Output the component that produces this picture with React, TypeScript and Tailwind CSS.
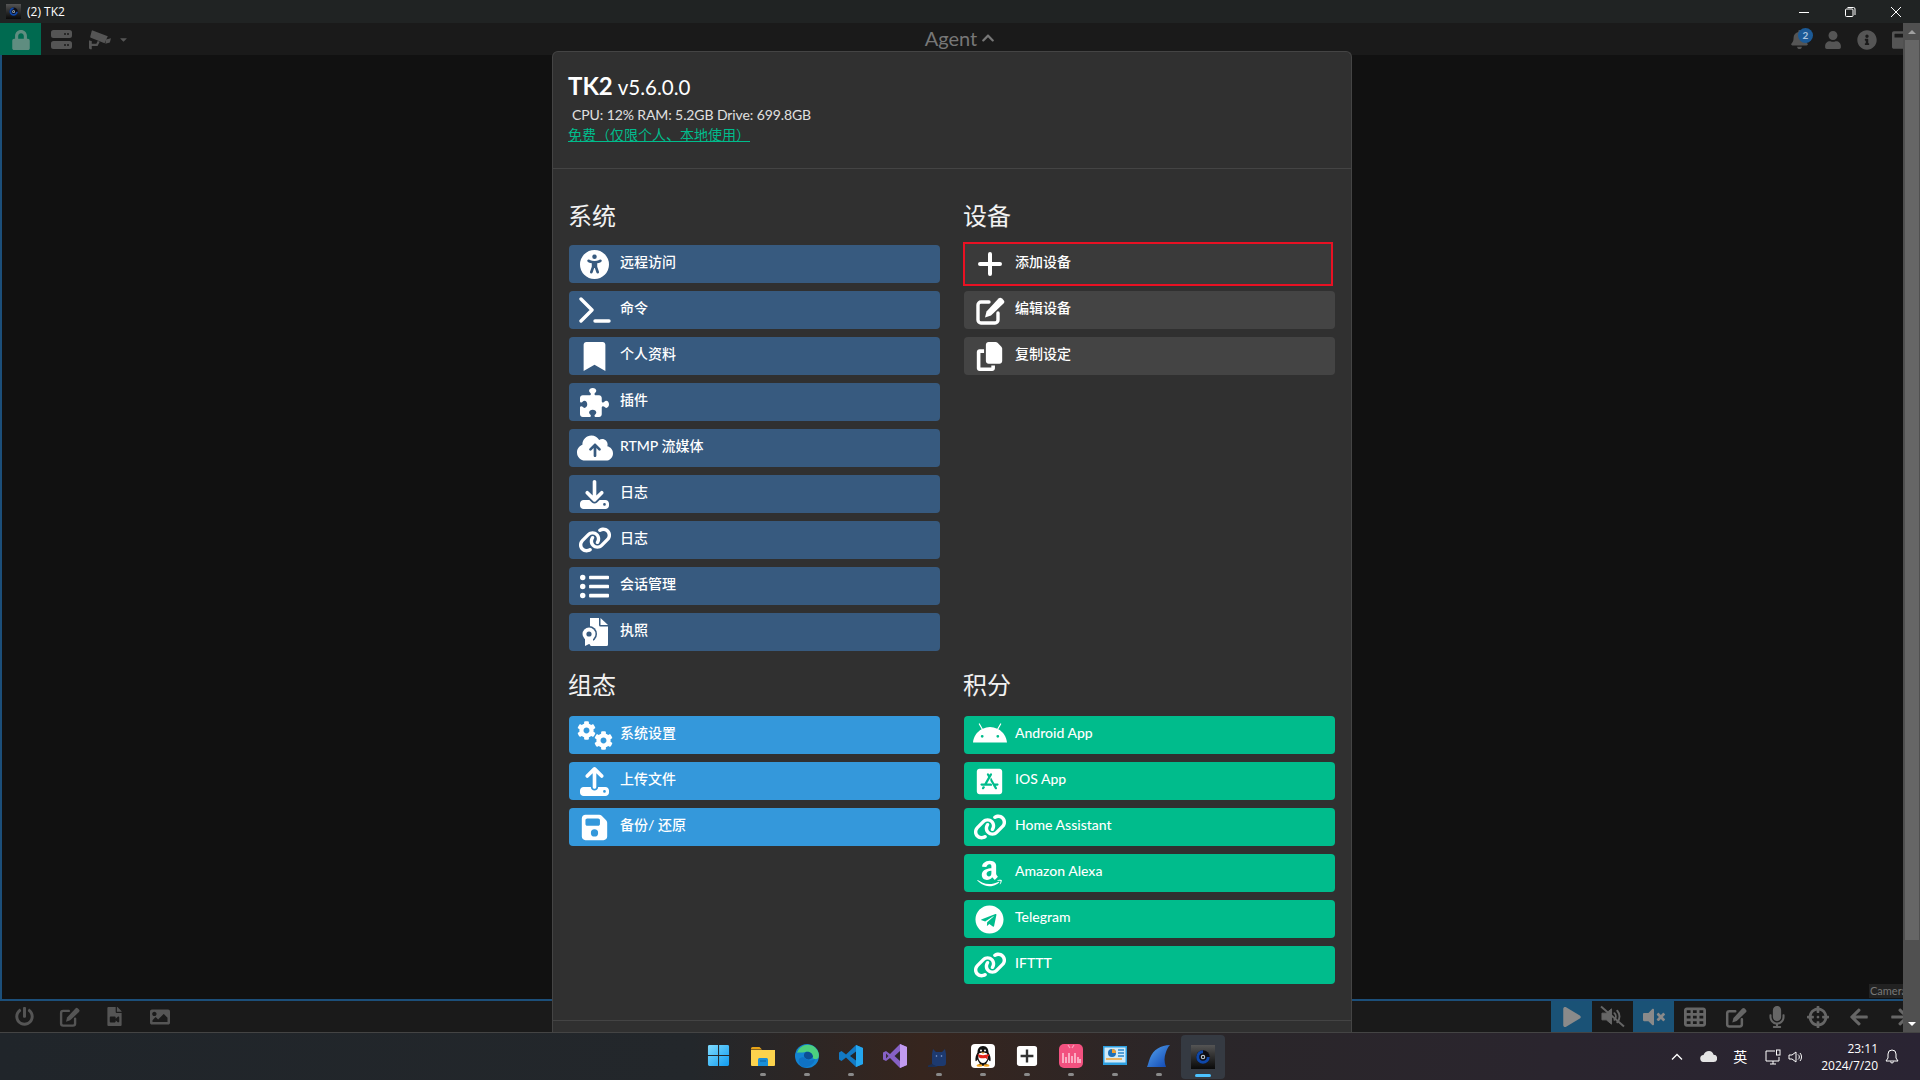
import React from 'react';
import {
  FaBookmark, FaListUl, FaAppStoreIos, FaAmazon, FaTelegram, FaLock, FaCaretDown, FaCog,
  FaChevronUp, FaBell, FaUser, FaInfoCircle, FaWindowMaximize, FaPowerOff, FaFileVideo, FaImage, FaPlay,
  FaVolumeMute, FaMicrophone, FaCrosshairs, FaArrowLeft, FaArrowRight,
} from 'react-icons/fa';
import {
  FaAndroid, FaCopy, FaUniversalAccess, FaPuzzlePiece, FaCloudArrowUp, FaDownload, FaUpload, FaFloppyDisk,
  FaLink, FaTableCells,
} from 'react-icons/fa6';

const FileCert = () => (
  <svg viewBox="0 0 30 30" className="w-[30px] h-[30px]" fill="currentColor">
    <path d="M10 1h9v7a1.5 1.5 0 0 0 1.5 1.5H28v18a1.5 1.5 0 0 1-1.5 1.5h-15A1.5 1.5 0 0 1 10 27.5z" />
    <path d="M20.5 1 28 8h-7.5z" />
    <circle cx="9" cy="17" r="8" fill="#375a7f" />
    <circle cx="9" cy="17" r="6.5" />
    <circle cx="9" cy="17" r="2.6" fill="#375a7f" />
    <path d="M5 22h8v7l-4-2-4 2z" />
  </svg>
);

const TerminalIcon = () => (
  <svg viewBox="0 0 32 26" className="w-[32px] h-[26px]" fill="none" stroke="currentColor" strokeWidth="3.4" strokeLinecap="round" strokeLinejoin="round">
    <path d="M2 2 13 13 2 24" />
    <path d="M16 24h14" />
  </svg>
);

const PlusIcon = () => (
  <svg viewBox="0 0 24 24" className="w-[24px] h-[24px]" fill="none" stroke="currentColor" strokeWidth="4" strokeLinecap="round">
    <path d="M12 2v20M2 12h20" />
  </svg>
);

const PenSquare = ({ size }: { size: string }) => (
  <svg viewBox="0 0 30 30" className={size} fill="currentColor">
    <path d="M14 7H6a3 3 0 0 0-3 3v15a3 3 0 0 0 3 3h14a3 3 0 0 0 3-3v-7" fill="none" stroke="currentColor" strokeWidth="3.4" strokeLinecap="round" />
    <path d="M10 22.500l1.500-6L23.500 3.500a2.500 2.500 0 0 1 3.500 0l1.500 1.500a2.500 2.500 0 0 1 0 3.500L16 20.500z" />
  </svg>
);

const Gears = () => (
  <div className="relative w-[36px] h-[29px]">
    <FaCog size={19} className="absolute left-0 top-0" />
    <FaCog size={19} className="absolute left-[17px] top-[10px]" />
  </div>
);

const ServerIcon = () => (
  <svg viewBox="0 0 21 19" className="w-[21px] h-[19px]" fill="currentColor">
    <path fillRule="evenodd" d="M2.500 0h16A2.500 2.500 0 0 1 21 2.500v3A2.500 2.500 0 0 1 18.500 8h-16A2.500 2.500 0 0 1 0 5.500v-3A2.500 2.500 0 0 1 2.500 0zM13 3.200v1.500h2V3.200zm3 0v1.500h2V3.200zM2.500 11h16a2.500 2.500 0 0 1 2.500 2.500v3a2.500 2.500 0 0 1-2.500 2.500h-16A2.500 2.500 0 0 1 0 16.500v-3A2.500 2.500 0 0 1 2.500 11zM13 14.200v1.500h2v-1.500zm3 0v1.500h2v-1.500z" />
  </svg>
);

const Cctv = () => (
  <svg viewBox="0 0 26 24" className="w-[24px] h-[22px]" fill="currentColor">
    <path d="M5 1.500 21.500 8l-3.500 7.500L3 9.500a1 1 0 0 1-.6-1.300L4 2a1 1 0 0 1 1-.5z" />
    <path d="M19.500 11.500 25 10l-1.300 4.600-4.800 1.500z" />
    <path d="M2 13h2v3h5l1.500-3 2.200 1-2.400 4.500H4V22H2v-9z" />
    <path d="M1 12.500h1.500v9H1z" />
  </svg>
);

const VolumeSlash = () => (
  <svg viewBox="0 0 26 24" className="w-[25px] h-[23px]" fill="none" stroke="currentColor">
    <path d="M2 8.500h4.500L12 4v16l-5.500-4.500H2z" fill="currentColor" strokeWidth="1" />
    <path d="M15 8.500a5 5 0 0 1 0 7M18 6a9 9 0 0 1 0 12" strokeWidth="2" strokeLinecap="round" />
    <path d="M1 1.500 25 22.500" strokeWidth="2" />
  </svg>
);

const WinLogo = () => (
  <svg viewBox="0 0 24 24" className="w-[23px] h-[23px]">
    <defs>
      <linearGradient id="win" x1="0" y1="0" x2="1" y2="1">
        <stop offset="0" stopColor="#7fdcff" />
        <stop offset="1" stopColor="#0f9bf0" />
      </linearGradient>
    </defs>
    <path d="M1 2.500A1.500 1.500 0 0 1 2.500 1h9v10.400H1zM12.600 1h8.900A1.500 1.500 0 0 1 23 2.500v8.900H12.600zM1 12.600h10.500V23h-9A1.500 1.500 0 0 1 1 21.500zM12.600 12.600H23v8.900a1.500 1.500 0 0 1-1.500 1.500h-8.900z" fill="url(#win)" />
  </svg>
);

const Folder = () => (
  <svg viewBox="0 0 24 24" className="w-[24px] h-[24px]">
    <path d="M0 4.500A1.500 1.500 0 0 1 1.500 3h7l2.500 2.500h-11z" fill="#e8a317" />
    <path d="M0 6h24v15a1 1 0 0 1-1 1H1a1 1 0 0 1-1-1z" fill="#fcd34d" />
    <path d="M7 15.500a1.500 1.500 0 0 1 1.500-1.500h7a1.500 1.500 0 0 1 1.500 1.500V22H7z" fill="#1a8fd8" />
    <path d="M9 17h6" stroke="#0d5f9e" strokeWidth="1" />
  </svg>
);

const Edge = () => (
  <svg viewBox="0 0 24 24" className="w-[24px] h-[24px]">
    <circle cx="12" cy="12" r="12" fill="#1383d1" />
    <path d="M2 9C4 2 11-1 17 1.500 22 4 25 9 23.500 13.500c-1 2-5 2-6 0 0-3-3-6.500-7-5.500C7 9 3 8 2 9z" fill="#4cd07f" />
    <path d="M11 8c4-1 7 2 7 5-2 3-6 3-8 1-2-2-1-5 1-6z" fill="#0c4f94" />
    <path d="M10 14c2 3 7 3 10 1-1 5-6 9-12 8-3-1-5-5-4-8 2-2 5-2 6-1z" fill="#0f72c4" />
  </svg>
);

const VsCode = () => (
  <svg viewBox="0 0 24 24" className="w-[24px] h-[24px]">
    <path d="M17 1 24 4v16l-7 3-10-9.500L2.500 17 0 15.500v-7L2.500 7 7 10.500z" fill="#1279c4" />
    <path d="M17 1 24 4v16l-7 3z" fill="#24a6ee" />
    <path d="M17 7.500 11 12l6 4.500z" fill="#232629" />
  </svg>
);

const VsIde = () => (
  <svg viewBox="0 0 24 24" className="w-[24px] h-[24px]">
    <path d="M17 0 24 3v18l-7 3-10-10-4 3-3-1.500v-7L3 7l4 3z" fill="#8661c5" />
    <path d="M17 0 24 3v18l-7 3z" fill="#c29bf0" />
    <path d="M17 7 11.500 12l5.500 5z" fill="#2c2628" />
    <path d="M3 9.500v5L5.500 12z" fill="#3a2c3a" />
  </svg>
);

const Cat = () => (
  <svg viewBox="0 0 24 24" className="w-[24px] h-[24px]">
    <path d="M6 5 9 8h6l3-3 1 5v9a3 3 0 0 1-3 3H8a3 3 0 0 1-3-3v-9z" fill="#1d3a70" />
    <path d="M5 20 1 21.500V23h10z" fill="#1b2f55" />
    <circle cx="9.500" cy="12" r=".8" fill="#8fa7d8" />
    <circle cx="14.500" cy="12" r=".8" fill="#8fa7d8" />
  </svg>
);

const QQ = () => (
  <svg viewBox="0 0 24 24" className="w-[24px] h-[24px]">
    <rect width="24" height="24" rx="4" fill="#fff" />
    <path d="M12 2c-4 0-5.500 3-5.500 6.500C5 11 4 14 4.500 17c.8.500 1.500-.500 2-1.500C7 17 8 18.500 9 19.500c-1.500.500-2 1.500-1.500 2 1 .500 6 .500 9 0 .5-.500 0-1.500-1.500-2 1-1 2-2.500 2.500-4 .500 1 1.200 2 2 1.500.500-3-.500-6-2-8.500C17.500 5 16 2 12 2z" fill="#111" />
    <path d="M8 9.500c0-1 8-1 8 0 1 3 1 6-1 8-2 2-4 2-6 0-2-2-2-5-1-8z" fill="#fff" />
    <path d="M6.500 10c3 1.500 8 1.500 11 0l.5 2-1.500.500v3l-2-1.500c-2.500.500-4.500.500-6.500-.500z" fill="#e2231a" />
    <circle cx="10" cy="6.500" r="1" fill="#fff" />
    <circle cx="14" cy="6.500" r="1" fill="#fff" />
    <path d="M10 8.500h4L12 10z" fill="#f5a623" />
    <ellipse cx="8.500" cy="21.500" rx="3" ry="1.200" fill="#f5a623" />
    <ellipse cx="15.500" cy="21.500" rx="3" ry="1.200" fill="#f5a623" />
  </svg>
);

const PlusTile = () => (
  <svg viewBox="0 0 24 24" className="w-[22px] h-[22px]">
    <rect x="1" y="1" width="22" height="22" rx="3" fill="#fff" />
    <path d="M12 5v14M5 12h14" stroke="#333" strokeWidth="2.600" />
  </svg>
);

const Bili = () => (
  <svg viewBox="0 0 24 24" className="w-[24px] h-[24px]">
    <rect width="24" height="24" rx="5" fill="#f2517f" />
    <path d="M4 19V9M7 19v-6M10 19V9M13 19v-7M16 19V9M19 19v-6M21 19v-4" stroke="#ffdce6" strokeWidth="1.300" />
    <path d="M9 1l2 3M15 1l-2 3" stroke="#f9a3bd" strokeWidth="1.200" />
  </svg>
);

const Monitor = () => (
  <svg viewBox="0 0 24 24" className="w-[24px] h-[24px]">
    <rect x="0" y="2" width="24" height="19" fill="#2d9fe0" />
    <rect x="1.500" y="3.500" width="21" height="15" fill="#cfeaf9" />
    <circle cx="9" cy="9" r="4" fill="#1f6fb5" />
    <path d="M9 5a4 4 0 0 1 4 4H9z" fill="#f0a030" />
    <path d="M15 6h6M15 9h6M15 12h6" stroke="#2d86c9" strokeWidth="1.500" />
    <path d="M3 15h16" stroke="#f0a030" strokeWidth="1.500" />
  </svg>
);

const Fin = () => (
  <svg viewBox="0 0 24 24" className="w-[24px] h-[24px]">
    <defs>
      <linearGradient id="fin" x1="0" y1="0" x2="1" y2="1">
        <stop offset="0" stopColor="#57a6f0" />
        <stop offset="1" stopColor="#0d43b0" />
      </linearGradient>
    </defs>
    <path d="M23 1C14 1 6 6 3 14 1.500 18 1 21 0 23h19c-2-5-2-10 0-15 1-3 2-5 4-7z" fill="url(#fin)" />
  </svg>
);

const CamLogo = ({ size }: { size: string }) => (
  <div className={`${size} bg-gradient-to-b from-[#555] to-[#0a0a0a] flex items-center justify-center`}>
    <svg viewBox="0 0 24 24" className="w-3/4 h-3/4">
      <circle cx="12" cy="12" r="9" fill="#0d0d14" />
      <path d="M12 3a9 9 0 1 0 9 9h-4a5 5 0 1 1-5-5z" fill="#0f47a8" />
      <circle cx="12" cy="12" r="3" fill="#b8c4d0" />
      <circle cx="12" cy="12" r="1.500" fill="#0a0a0a" />
    </svg>
  </div>
);

type Row = { icon: React.ReactNode; label: string };

const linkIcon = <FaLink size={34} />;

const systemRows: Row[] = [
  { icon: <FaUniversalAccess size={29} />, label: '远程访问' },
  { icon: <TerminalIcon />, label: '命令' },
  { icon: <FaBookmark size={29} />, label: '个人资料' },
  { icon: <FaPuzzlePiece size={29} />, label: '插件' },
  { icon: <FaCloudArrowUp size={36} />, label: 'RTMP 流媒体' },
  { icon: <FaDownload size={29} />, label: '日志' },
  { icon: linkIcon, label: '日志' },
  { icon: <FaListUl size={29} />, label: '会话管理' },
  { icon: <FileCert />, label: '执照' },
];

const deviceRows: Row[] = [
  { icon: <PenSquare size="w-[30px] h-[30px]" />, label: '编辑设备' },
  { icon: <FaCopy size={29} />, label: '复制设定' },
];

const configRows: Row[] = [
  { icon: <Gears />, label: '系统设置' },
  { icon: <FaUpload size={29} />, label: '上传文件' },
  { icon: <FaFloppyDisk size={29} />, label: '备份/ 还原' },
];

const pointRows: Row[] = [
  { icon: <FaAndroid size={34} />, label: 'Android App' },
  { icon: <FaAppStoreIos size={29} />, label: 'IOS App' },
  { icon: linkIcon, label: 'Home Assistant' },
  { icon: <FaAmazon size={29} />, label: 'Amazon Alexa' },
  { icon: <FaTelegram size={29} />, label: 'Telegram' },
  { icon: linkIcon, label: 'IFTTT' },
];

const MenuButton = ({ row, color }: { row: Row; color: string }) => (
  <div className={`h-[38px] rounded-[4px] flex items-center text-white ${color}`}>
    <div className="w-[51px] flex justify-center shrink-0">{row.icon}</div>
    <span className="pb-[5px] text-[14px] font-medium">{row.label}</span>
  </div>
);

const Section = ({ title, headMargin, children }: { title: string; headMargin: string; children: React.ReactNode }) => (
  <div>
    <h2 className={`h-[38px] -ml-[1px] text-[24px] leading-[38px] text-[#f2f2f2] ${headMargin}`}>{title}</h2>
    <div className="flex flex-col gap-2">{children}</div>
  </div>
);

const Modal = () => (
  <div className="absolute top-[28px] left-[552px] w-[800px] h-[981px] overflow-hidden bg-[#303030] border border-[#444] border-b-0 rounded-t-[6px]">
    <div className="h-[117px] pl-[15px] pt-[16px] border-b border-[#444]">
      <div className="h-[32px] flex items-baseline gap-[5px] text-white">
        <span className="text-[24px] font-bold">TK2</span>
        <span className="text-[20.5px]">v5.6.0.0</span>
      </div>
      <div className="mt-[5px] pl-[4px] text-[14px] leading-[20px] tracking-[-0.1px] text-[#e0e0e0]">CPU: 12% RAM: 5.2GB Drive: 699.8GB</div>
      <div className="text-[14px] leading-[20px] text-[#00bc8c] underline">免费（仅限个人、本地使用）</div>
    </div>
    <div className="pl-[16px] pt-[28px] grid grid-cols-[371px_371px] gap-x-6 gap-y-[15px]">
      <Section title="系统" headMargin="mb-[10px]">
        {systemRows.map((r, i) => <MenuButton key={i} row={r} color="bg-[#375a7f]" />)}
      </Section>
      <Section title="设备" headMargin="mb-[10px]">
        <div className="relative h-[38px] flex items-center text-white">
          <div className="absolute -top-[3px] -bottom-[3px] -left-[1px] right-[2px] bg-[#3a3a3a] border-2 border-[#e81123]" />
          <div className="relative w-[51px] flex justify-center shrink-0"><PlusIcon /></div>
          <span className="relative pb-[5px] text-[14px] font-medium">添加设备</span>
        </div>
        {deviceRows.map((r, i) => <MenuButton key={i} row={r} color="bg-[#444444]" />)}
      </Section>
      <Section title="组态" headMargin="mb-[12px]">
        {configRows.map((r, i) => <MenuButton key={i} row={r} color="bg-[#3498db]" />)}
      </Section>
      <Section title="积分" headMargin="mb-[12px]">
        {pointRows.map((r, i) => <MenuButton key={i} row={r} color="bg-[#00bc8c]" />)}
      </Section>
    </div>
    <div className="mt-[36px] border-t border-[#444]" />
  </div>
);

const playbar: { icon: React.ReactNode; active?: boolean }[] = [
  { icon: <FaPlay size={20} />, active: true },
  { icon: <VolumeSlash /> },
  { icon: <FaVolumeMute size={22} />, active: true },
  { icon: <FaTableCells size={22} /> },
  { icon: <PenSquare size="w-[22px] h-[22px]" /> },
  { icon: <FaMicrophone size={22} /> },
  { icon: <FaCrosshairs size={22} /> },
  { icon: <FaArrowLeft size={20} /> },
  { icon: <FaArrowRight size={20} /> },
];

const taskbarApps: { icon: React.ReactNode; dot: boolean }[] = [
  { icon: <WinLogo />, dot: false },
  { icon: <Folder />, dot: true },
  { icon: <Edge />, dot: true },
  { icon: <VsCode />, dot: true },
  { icon: <VsIde />, dot: false },
  { icon: <Cat />, dot: true },
  { icon: <QQ />, dot: true },
  { icon: <PlusTile />, dot: true },
  { icon: <Bili />, dot: true },
  { icon: <Monitor />, dot: true },
  { icon: <Fin />, dot: true },
];

export default function App() {
  return (
    <div className="w-[1920px] h-[1080px] overflow-hidden flex flex-col bg-[#111] font-[Lato,'Noto_Sans_CJK_SC',sans-serif]">
      {/* window title */}
      <div className="h-[23px] bg-[#202323] flex items-center shrink-0 text-white">
        <div className="ml-[6px] mr-[6px]"><CamLogo size="w-[15px] h-[15px]" /></div>
        <span className="text-[12px] font-['Open_Sans','Noto_Sans_CJK_SC',sans-serif]">(2) TK2</span>
        <div className="ml-auto mr-[1px] flex items-center">
          <div className="w-[46px] flex justify-center">
            <svg width="12" height="12" viewBox="0 0 12 12" stroke="white"><path d="M1 6.500h10" /></svg>
          </div>
          <div className="w-[46px] flex justify-center">
            <svg width="12" height="12" viewBox="0 0 12 12" stroke="white" fill="none"><rect x="1.500" y="3" width="7.500" height="7.500" rx="1" /><path d="M3.500 1.500h6a1.500 1.500 0 0 1 1.500 1.500v6" /></svg>
          </div>
          <div className="w-[46px] flex justify-center">
            <svg width="12" height="12" viewBox="0 0 12 12" stroke="white"><path d="M1 1l10 10M11 1 1 11" /></svg>
          </div>
        </div>
      </div>

      <div className="relative flex-1 flex flex-col min-h-0">
        {/* top toolbar */}
        <div className="h-[32px] bg-[#1a1a1a] grid grid-cols-[1fr_auto_1fr] items-center shrink-0 text-[#555]">
          <div className="flex items-center h-full">
            <div className="w-[41px] h-full bg-[#006a50] flex items-center justify-center text-[#5f8d80]"><FaLock size={20} /></div>
            <div className="w-[40px] flex justify-center"><ServerIcon /></div>
            <div className="ml-[7px] flex items-center gap-[6px]"><Cctv /><FaCaretDown size={11} /></div>
          </div>
          <div className="pb-[3px] flex items-center gap-[4px] text-[20px] text-[#777]">Agent <FaChevronUp size={14} /></div>
          <div className="flex items-center justify-end pr-[8px] gap-[15px]">
            <div className="relative">
              <FaBell size={19} />
              <span className="absolute -top-[2px] left-[8px] w-[15px] h-[15px] rounded-full bg-[#1c5a96] text-[#a9c4de] text-[10px] leading-[15px] text-center font-bold">2</span>
            </div>
            <FaUser size={18} />
            <FaInfoCircle size={20} />
            <FaWindowMaximize size={20} />
          </div>
        </div>

        {/* video area */}
        <div className="flex-1 bg-[#111] border-l-2 border-[#1c4f7a]" />

        {/* bottom toolbar */}
        <div className="h-[33px] bg-[#1a1a1a] border-t-2 border-[#1c4f7a] flex items-center justify-between shrink-0 text-[#555]">
          <div className="flex items-center">
            {[<FaPowerOff size={19} />, <PenSquare size="w-[21px] h-[21px]" />, <FaFileVideo size={19} />, <FaImage size={20} />].map((ic, i) => (
              <div key={i} className="w-[45px] flex justify-center first:ml-[2px]">{ic}</div>
            ))}
          </div>
          <div className="flex h-full">
            {playbar.map((b, i) => (
              <div key={i} className={`w-[41px] h-full flex items-center justify-center ${b.active ? 'bg-[#1a5276] text-[#8a8a8a]' : 'text-[#666]'}`}>{b.icon}</div>
            ))}
          </div>
        </div>

        <Modal />

        {/* overlays on the right edge */}
        <div className="absolute right-[16px] top-[961px] bg-[#222] pl-[1px] text-[11px] leading-[14px] text-[#777] w-[35px] overflow-hidden">Camera</div>
        <div className="absolute right-0 top-0 bottom-0 w-[17px] bg-[#505050] flex flex-col items-center">
          <div className="h-[17px] flex items-center justify-center">
            <div className="w-0 h-0 border-x-[4px] border-x-transparent border-b-[4px] border-b-[#a0a0a0]" />
          </div>
          <div className="w-[14px] h-[900px] bg-[#666]" />
          <div className="mt-auto h-[17px] flex items-center justify-center">
            <div className="w-0 h-0 border-x-[4px] border-x-transparent border-t-[4px] border-t-white" />
          </div>
        </div>
      </div>

      {/* windows taskbar */}
      <div className="h-[48px] shrink-0 border-t border-[#444] grid grid-cols-[1fr_auto_1fr] items-center bg-[linear-gradient(90deg,#20252a_0%,#23272b_36%,#36251e_48%,#2a2629_62%,#2a2433_100%)]">
        <div />
        <div className="ml-[1px] flex items-center h-full">
          {taskbarApps.map((a, i) => (
            <div key={i} className="relative w-[44px] h-full pb-[2px] flex items-center justify-center">
              {a.icon}
              {a.dot && <span className="absolute bottom-[4px] w-[6px] h-[3px] rounded-full bg-[#8a8a8a]" />}
            </div>
          ))}
          <div className="relative w-[44px] h-[44px] rounded-[4px] bg-[#353a42] flex items-center justify-center">
            <CamLogo size="w-[24px] h-[24px]" />
            <span className="absolute bottom-[2px] w-[16px] h-[3px] rounded-full bg-[#4cc2ff]" />
          </div>
        </div>
        <div className="flex items-center justify-end text-white pr-[21px]">
          <svg width="12" height="8" viewBox="0 0 12 8" fill="none" stroke="white" strokeWidth="1.300" className="mr-[17px]"><path d="M1 6.500 6 1.500l5 5" /></svg>
          <svg width="17" height="11" viewBox="0 0 17 11" fill="#e4e4e4" className="mr-[15px]"><path d="M4 11a3.500 3.500 0 0 1-.5-7C4.500 1.500 6.500 0 9 0c2.400 0 4 1.500 4.600 3.800A3.600 3.600 0 0 1 13.500 11z" /></svg>
          <span className="text-[14px] w-[16px] text-center font-['Noto_Sans_CJK_SC',sans-serif] mr-[17px]">英</span>
          <svg width="16" height="16" viewBox="0 0 16 16" fill="none" stroke="white" strokeWidth="1" className="mr-[7px]"><path d="M10 2H1v10h13V8M5 15h6M8 12v3" /><rect x="11.500" y="1" width="3.500" height="5" /></svg>
          <svg width="16" height="14" viewBox="0 0 16 14" fill="none" stroke="white" strokeWidth="1" className="mr-[17px]"><path d="M1 5h3l4-3v10L4 9H1z" /><path d="M10 4.500a3 3 0 0 1 0 5M12 3a6 6 0 0 1 0 8" /></svg>
          <div className="text-right text-[12px] leading-[17px] font-['Open_Sans',sans-serif] mr-[7px]">
            <div>23:11</div>
            <div>2024/7/20</div>
          </div>
          <svg width="14" height="16" viewBox="0 0 14 16" fill="none" stroke="white" strokeWidth="1"><path d="M7 1a4 4 0 0 0-4 4v4l-2 3h12l-2-3V5a4 4 0 0 0-4-4zM5.500 12.500a1.500 1.500 0 0 0 3 0" /></svg>
        </div>
      </div>
    </div>
  );
}
